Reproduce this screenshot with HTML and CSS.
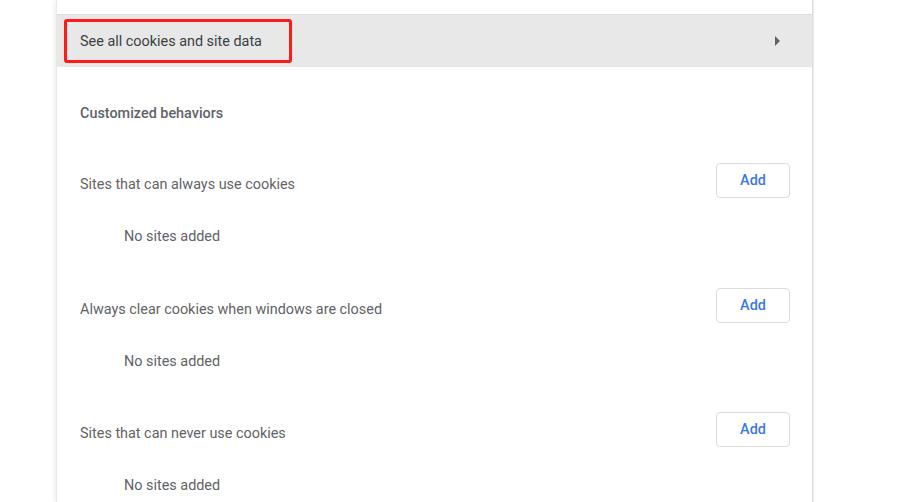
FILE: index.html
```html
<!DOCTYPE html>
<html lang="en">
<head>
<meta charset="utf-8">
<title>Cookies and site data</title>
<link rel="stylesheet" href="styles.css">
</head>
<body>
<main class="card">
  <div class="top-space"></div>
  <div class="link-row">
    <span class="highlight">See all cookies and site data</span>
    <svg class="arrow" width="5" height="10" viewBox="0 0 5 10" aria-hidden="true"><path d="M0 0 L5 5 L0 10 Z" fill="#5f6368"/></svg>
  </div>
  <h2 class="section-title">Customized behaviors</h2>
  <section class="item">
    <div class="item-head">
      <span class="item-label">Sites that can always use cookies</span>
      <button class="add-btn">Add</button>
    </div>
    <div class="empty">No sites added</div>
  </section>
  <section class="item">
    <div class="item-head">
      <span class="item-label">Always clear cookies when windows are closed</span>
      <button class="add-btn">Add</button>
    </div>
    <div class="empty">No sites added</div>
  </section>
  <section class="item">
    <div class="item-head">
      <span class="item-label">Sites that can never use cookies</span>
      <button class="add-btn">Add</button>
    </div>
    <div class="empty">No sites added</div>
  </section>
</main>
</body>
</html>
```
FILE: styles.css
```css
html, body {
  margin: 0;
  padding: 0;
  background: #ffffff;
  height: 502px;
  overflow: hidden;
  font-family: Roboto, "Liberation Sans", Arial, sans-serif;
  font-size: 14.4px;
  color: #5f6368;
}

.card {
  margin-left: 57px;
  width: 755px;
  min-height: 502px;
  background: #ffffff;
  box-shadow: -1px 0 0 #e9e9e9, -3px 0 4px rgba(0, 0, 0, 0.06), 1px 0 0 #dcdcdc, 2px 0 0 #ececec;
}

.top-space {
  height: 14px;
}

.link-row {
  height: 52px;
  border-top: 1px solid #dcdcdc;
  background: #e8e8e8;
  display: flex;
  align-items: center;
  padding-left: 7px;
  padding-right: 32px;
  box-sizing: content-box;
}

.highlight {
  display: flex;
  align-items: center;
  height: 36px;
  border: 3px solid #ff1a1a;
  border-radius: 3px;
  padding: 2px 27px 0 13px;
  margin-top: -1px;
  color: #3c4043;
  font-size: 14.4px;
}

.arrow {
  margin-left: auto;
}

.section-title {
  margin: 37px 0 0 23px;
  font-size: 14.4px;
  font-weight: 500;
  line-height: 20px;
  color: #5f6368;
}

.item {
  padding: 39px 22px 0 23px;
}

.item + .item {
  padding-top: 40.5px;
}

.item-head {
  display: flex;
  align-items: center;
  justify-content: space-between;
  height: 35px;
}

.item-label {
  padding-top: 9px;
  line-height: 20px;
}

.add-btn {
  width: 74px;
  height: 35px;
  box-sizing: border-box;
  background: #ffffff;
  border: 1px solid #dadce0;
  border-radius: 4px;
  font-family: Roboto, "Liberation Sans", Arial, sans-serif;
  font-size: 14.4px;
  font-weight: 500;
  color: #3b78e7;
  padding: 0;
}

.empty {
  margin-top: 29px;
  padding-left: 44px;
  line-height: 20px;
}
```
